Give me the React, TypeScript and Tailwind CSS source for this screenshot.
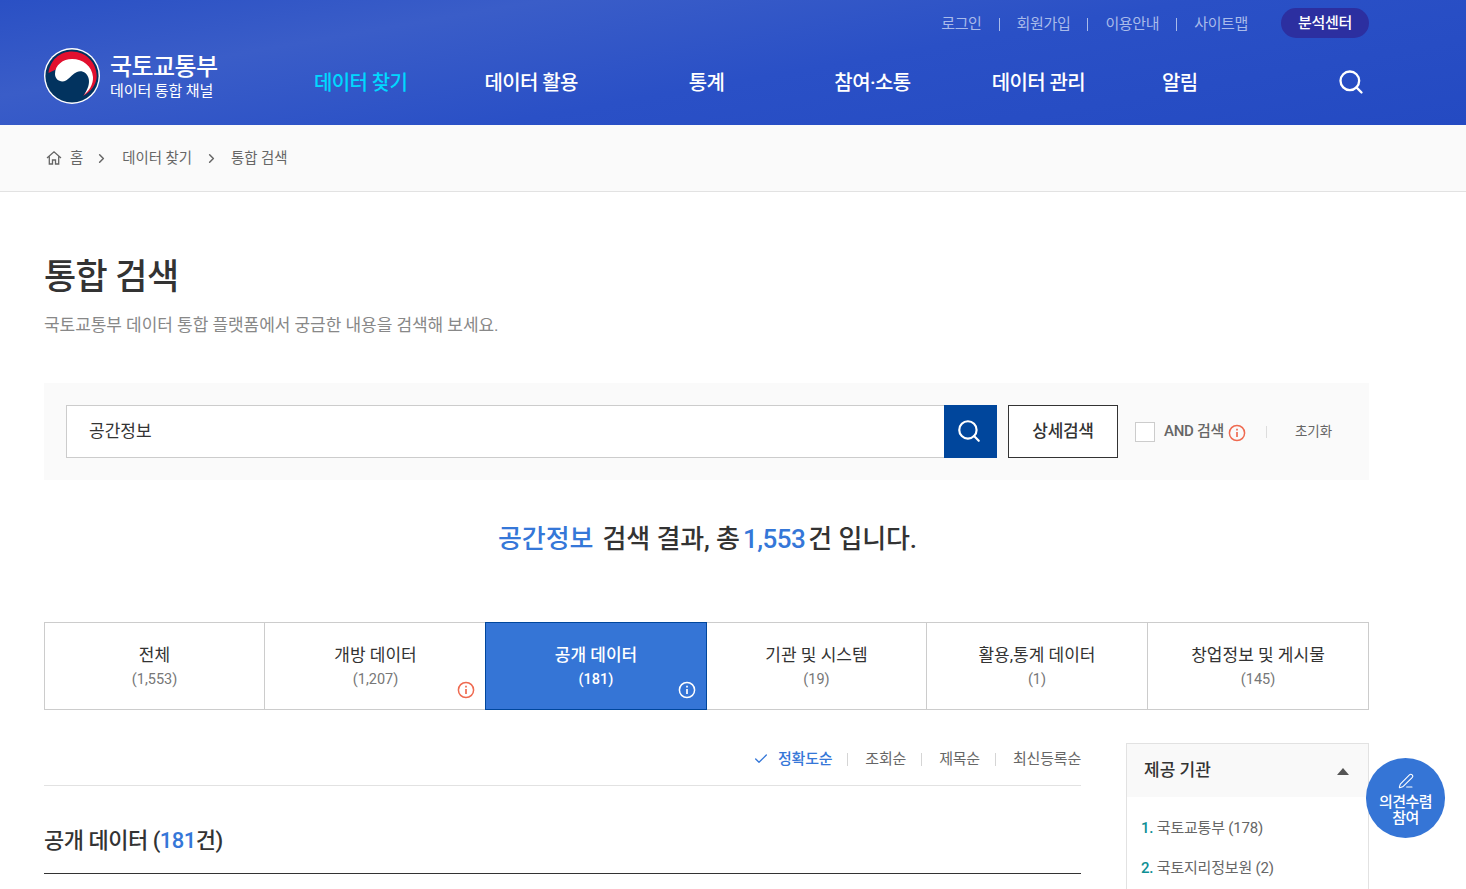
import { ChevronRight, Check, PenLine, Search } from "lucide-react";

const utilLinks = ["로그인", "회원가입", "이용안내", "사이트맵"];

const navItems = [
  { label: "데이터 찾기", cls: "text-[#00d8ff]" },
  { label: "데이터 활용", cls: "ml-[77px] text-white" },
  { label: "통계", cls: "ml-[111px] text-white" },
  { label: "참여·소통", cls: "ml-[110px] text-white" },
  { label: "데이터 관리", cls: "ml-[81px] text-white" },
  { label: "알림", cls: "ml-[77px] text-white" },
];

const tabs = [
  { label: "전체", count: "(1,553)" },
  { label: "개방 데이터", count: "(1,207)", info: true },
  { label: "공개 데이터", count: "(181)", info: true, active: true },
  { label: "기관 및 시스템", count: "(19)" },
  { label: "활용,통계 데이터", count: "(1)" },
  { label: "창업정보 및 게시물", count: "(145)" },
];

const sorts = ["조회순", "제목순", "최신등록순"];

function InfoIcon({ color }: { color: string }) {
  return (
    <svg width="18" height="18" viewBox="0 0 18 18" fill="none" stroke={color} strokeWidth="1.5">
      <circle cx="9" cy="9" r="7.6" />
      <path d="M9 8v5" strokeWidth="1.7" />
      <path d="M9 4.8v1.7" strokeWidth="1.7" />
    </svg>
  );
}

// taegeuk emblem
function Logo() {
  return (
    <svg width="56" height="56" viewBox="0 0 56 56" className="shrink-0">
      <circle cx="28" cy="28" r="28" fill="#ffffff" />
      <circle cx="28" cy="28" r="26.6" fill="#02335f" />
      <path d="M4.500 25C6 12 16 3.500 28 3.500C42 3.500 52.700 15 52.700 28C52.700 36 47 44 39 48L47 38L47 30L35 18L15 20z" fill="#e2102f" />
      <path d="M11 26C11 17 19 11 28 11C39 11 48 18 49 29C49.500 36 45 43 40 47C44 41 46 35 44.500 30C43 25 38 22 33 24C29 25.500 27 29 22 32.500C17 35 11 32 11 26z" fill="#ffffff" />
    </svg>
  );
}

export default function App() {
  return (
    <div className="relative h-screen overflow-hidden bg-white font-['Roboto','Noto_Sans_CJK_KR',sans-serif] text-[#333]">
      {/* Header */}
      <header className="h-[125px] bg-[linear-gradient(170deg,#2a50c4_0%,#3a5dc8_25%,#2a50c6_55%,#244ac2_100%)]">
        <div className="ml-[44px] w-[1325px]">
          <div className="flex h-[48px] items-start justify-end pt-[9px]">
            <ul className="mt-px flex h-[28px] items-center text-[15px] tracking-[-0.35px] text-[#a9bbea]">
              {utilLinks.map((t, i) => (
                <li key={t} className="flex items-center">
                  {i > 0 && <span className="mx-[17px] h-[13px] w-px bg-[#a9bbea]" />}
                  {t}
                </li>
              ))}
            </ul>
            <span className="ml-[33px] flex h-[30px] w-[88px] -translate-y-px items-center justify-center rounded-full bg-[#2c2fa0] pt-px text-[15px] font-medium tracking-[-0.3px] text-white">
              분석센터
            </span>
          </div>
          <div className="flex items-start">
            <Logo />
            <div className="ml-[10px] w-[204px] pt-[4px] text-white">
              <div className="text-[24px] leading-[30px] font-medium tracking-[-0.6px]">국토교통부</div>
              <div className="text-[15px] leading-[18px] tracking-[-0.1px]">데이터 통합 채널</div>
            </div>
            <nav className="mt-[20px] flex text-[20px] leading-[30px] font-medium tracking-[-0.6px]">
              {navItems.map((n) => (
                <a key={n.label} className={n.cls}>
                  {n.label}
                </a>
              ))}
            </nav>
            <Search className="mt-[20px] mr-[4px] ml-auto h-[28px] w-[28px] text-white" strokeWidth={2} />
          </div>
        </div>
      </header>

      {/* Breadcrumb */}
      <div className="flex h-[67px] items-center border-b border-[#e2e2e2] bg-[#fafafa] pl-[46px] text-[14.4px] text-[#666]">
        <svg width="16" height="16" viewBox="0 0 16 16" fill="none" stroke="#666" strokeWidth="1.3">
          <path d="M1 8 8 1.800 15 8M3.300 6.500V14H6.500V10H9.500V14H12.700V6.500" />
        </svg>
        <span className="ml-[8px] pt-[2px]">홈</span>
        <ChevronRight className="mr-[13px] ml-[11px] h-[15px] w-[15px] text-[#666]" strokeWidth={2.4} />
        <span className="pt-[2px]">데이터 찾기</span>
        <ChevronRight className="mx-[12px] h-[15px] w-[15px] text-[#666]" strokeWidth={2.4} />
        <span className="pt-[2px]">통합 검색</span>
      </div>

      <main className="ml-[44px] w-[1325px]">
        <h1 className="mt-[62px] text-[35px] leading-[48px] font-medium tracking-[-0.6px] text-[#333]">통합 검색</h1>
        <p className="mt-[11px] text-[17px] leading-[24px] tracking-[-0.05px] text-[#888]">
          국토교통부 데이터 통합 플랫폼에서 궁금한 내용을 검색해 보세요.
        </p>

        {/* Search box */}
        <section className="mt-[46px] flex h-[97px] items-center bg-[#fafafa] pl-[22px]">
          <div className="flex h-[53px] w-[931px]">
            <div className="flex flex-1 items-center border border-r-0 border-[#ccc] bg-white pt-px pl-[22px] text-[17px]">
              공간정보
            </div>
            <button className="flex w-[53px] items-center justify-center bg-[#00469c]">
              <Search className="-mt-[1px] -ml-[3px] h-[26px] w-[26px] text-white" strokeWidth={2} />
            </button>
          </div>
          <button className="ml-[11px] h-[53px] w-[110px] border border-[#333] bg-white text-[17px] font-medium tracking-[-0.3px]">
            상세검색
          </button>
          <span className="ml-[17px] h-[20px] w-[20px] border border-[#ccc] bg-white" />
          <span className="ml-[9px] text-[15px] font-medium tracking-[-0.3px] text-[#666]">AND 검색</span>
          <span className="mt-[3px] ml-[4px]">
            <InfoIcon color="#ef6a50" />
          </span>
          <span className="ml-[20px] h-[12px] w-px bg-[#ddd]" />
          <span className="ml-[28px] text-[13.5px] text-[#666]">초기화</span>
        </section>

        <h2 className="mt-[40px] pl-[2px] text-center text-[26px] leading-[38px] font-medium tracking-[-0.13px] text-[#333]">
          <span className="mr-[3px] text-[#3577d8]">공간정보</span> 검색 결과, 총
          <span className="mx-[3px] tracking-[-0.5px] text-[#3577d8]">1,553</span>건 입니다.
        </h2>

        {/* Tabs */}
        <div className="mt-[64px] grid h-[88px] grid-cols-[220px_221px_221px_220px_221px_1fr] border border-[#ccc]">
          {tabs.map((t, i) => (
            <div
              key={t.label}
              className={
                t.active
                  ? "relative -my-px -ml-px flex flex-col items-center justify-center border border-[#00469c] bg-[#3575d6] pt-[2px] font-medium text-white"
                  : i < tabs.length - 1 && !tabs[i + 1].active
                    ? "relative flex flex-col items-center justify-center border-r border-[#ccc] pt-[2px]"
                    : "relative flex flex-col items-center justify-center pt-[2px]"
              }
            >
              <div className="text-[17px] leading-[26px]">{t.label}</div>
              <div className={t.active ? "text-[14.5px] leading-[24px] text-white" : "text-[14.5px] leading-[24px] text-[#777]"}>{t.count}</div>
              {t.info && (
                <span className={t.active ? "absolute right-[10px] bottom-[10px]" : "absolute right-[11px] bottom-[10px]"}>
                  <InfoIcon color={t.active ? "#ffffff" : "#ef6a50"} />
                </span>
              )}
            </div>
          ))}
        </div>

        {/* Results + filter */}
        <div className="mt-[33px] flex items-start justify-between">
          <div className="w-[1037px]">
            <div className="flex h-[43px] items-start justify-end border-b border-[#e2e2e2] pt-[5px] text-[15px] leading-[22px] tracking-[-0.2px] text-[#666]">
              <Check className="mt-[3px] mr-[9px] h-[16px] w-[16px] text-[#3577d8]" strokeWidth={2} />
              <span className="font-medium text-[#3577d8]">정확도순</span>
              {sorts.map((s) => (
                <span key={s} className="flex items-center">
                  <span className="mt-[1px] mr-[17px] ml-[15px] h-[13px] w-px bg-[#d5d5d5]" />
                  {s}
                </span>
              ))}
            </div>
            <h3 className="flex h-[88px] items-center border-b border-[#333] pt-[21px] text-[22px] font-medium tracking-[-0.5px] text-[#333]">
              <span>
                공개 데이터 (<span className="text-[#3577d8]">181</span>건)
              </span>
            </h3>
          </div>
          <aside className="h-[200px] w-[243px] border border-[#e2e2e2]">
            <div className="flex h-[53px] items-center justify-between bg-[#f9f9f9] pt-px pr-[19px] pl-[17px] text-[17px] font-medium">
              제공 기관
              <span className="mt-[1px] h-0 w-0 border-x-[6px] border-b-[7px] border-x-transparent border-b-[#555]" />
            </div>
            <ul className="px-[14px] pt-[11px] text-[15px] leading-[40px] tracking-[-0.2px] text-[#666]">
              <li>
                <span className="font-medium text-[#0e8f95]">1.</span> 국토교통부 (178)
              </li>
              <li>
                <span className="font-medium text-[#0e8f95]">2.</span> 국토지리정보원 (2)
              </li>
            </ul>
          </aside>
        </div>
      </main>

      {/* Floating opinion button */}
      <a className="absolute top-[758px] left-[1366px] flex h-[80px] w-[79px] flex-col items-center justify-center rounded-full bg-[#3575d6] pt-[2px] text-center text-[15px] leading-[16px] font-medium tracking-[-0.5px] text-white">
        <PenLine className="mb-[5px] h-[16px] w-[16px]" strokeWidth={1.6} />
        <span className="w-[60px]">의견수렴 참여</span>
      </a>
    </div>
  );
}
